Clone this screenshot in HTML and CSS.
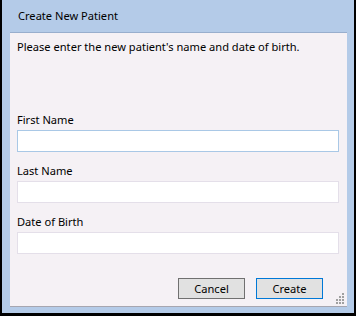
FILE: index.html
```html
<!DOCTYPE html>
<html lang="en">
<head>
  <meta charset="UTF-8">
  <title>Create New Patient</title>
  <link rel="stylesheet" href="styles.css">
</head>
<body>
  <div class="window">
    <div class="title-bar">Create New Patient</div>
    <div class="panel">
      <p class="intro">Please enter the new patient's name and date of birth.</p>

      <div class="field first">
        <label for="first-name">First Name</label>
        <input id="first-name" class="focused" type="text">
      </div>

      <div class="field">
        <label for="last-name">Last Name</label>
        <input id="last-name" type="text">
      </div>

      <div class="field">
        <label for="dob">Date of Birth</label>
        <input id="dob" type="text">
      </div>

      <div class="actions">
        <button class="btn">Cancel</button>
        <button class="btn default">Create</button>
      </div>

      <svg class="grip" width="9" height="11" viewBox="0 0 9 11">
        <rect x="6" y="0" width="2" height="2" />
        <rect x="6" y="3" width="2" height="2" />
        <rect x="3" y="3" width="2" height="2" />
        <rect x="6" y="6" width="2" height="2" />
        <rect x="3" y="6" width="2" height="2" />
        <rect x="0" y="6" width="2" height="2" />
        <rect x="6" y="9" width="2" height="2" />
        <rect x="3" y="9" width="2" height="2" />
        <rect x="0" y="9" width="2" height="2" />
      </svg>
    </div>
  </div>
</body>
</html>
```

FILE: styles.css
```css
* {
  margin: 0;
  padding: 0;
  box-sizing: border-box;
}

body {
  width: 356px;
  height: 316px;
  background-color: #000000;
  font-family: "Noto Sans", sans-serif;
  font-size: 11.1px;
  color: #000000;
  overflow: hidden;
}

.window {
  width: 356px;
  height: 316px;
  background-color: #b4cbe8;
  border-left: 2px solid #000000;
  border-right: 2px solid #000000;
  border-bottom: 3px solid #000000;
  padding: 0 7px 6px 8px;
  display: flex;
  flex-direction: column;
}

.title-bar {
  height: 32px;
  line-height: 32px;
  padding-left: 8px;
}

.panel {
  flex: 1;
  position: relative;
  background-color: #f5f1f5;
  border-top: 1px solid #98aecd;
  border-bottom: 1px solid #a6a6b0;
  padding: 6px 8px 0 7px;
  display: flex;
  flex-direction: column;
}

.intro {
  line-height: 16px;
}

.field {
  display: flex;
  flex-direction: column;
  gap: 2px;
  margin-top: 11px;
}

.field.first {
  margin-top: 57px;
}

.field label {
  line-height: 16px;
}

.field input {
  height: 22px;
  border: 1px solid #e4dfe9;
  background-color: #ffffff;
  outline: none;
  font-family: inherit;
  font-size: inherit;
}

.field input.focused {
  border-color: #a9c8e6;
}

.actions {
  display: flex;
  justify-content: flex-end;
  gap: 11px;
  margin-top: 24px;
  padding-right: 16px;
}

.btn {
  width: 67px;
  height: 21px;
  background-color: #e1e1e1;
  border: 1px solid #707070;
  font-family: inherit;
  font-size: inherit;
  color: #000000;
}

.btn.default {
  border-color: #0078d7;
}

.grip {
  position: absolute;
  right: 2px;
  bottom: 2px;
  fill: #a0a0a0;
}
```
